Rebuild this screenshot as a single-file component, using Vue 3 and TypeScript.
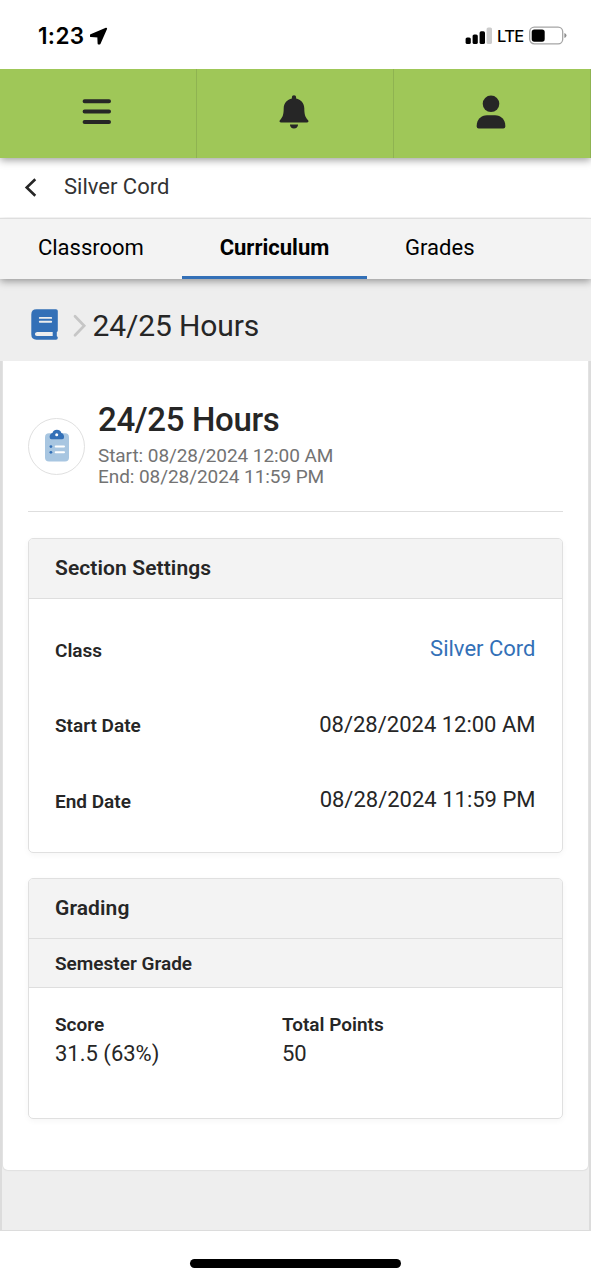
<script setup lang="ts">
interface Setting {
  label: string
  value: string
  link?: boolean
}

const tabs = ['Classroom', 'Curriculum', 'Grades']
const activeTab = 'Curriculum'

const settings: Setting[] = [
  { label: 'Class', value: 'Silver Cord', link: true },
  { label: 'Start Date', value: '08/28/2024 12:00 AM' },
  { label: 'End Date', value: '08/28/2024 11:59 PM' },
]

const grades = [
  { label: 'Score', value: '31.5 (63%)' },
  { label: 'Total Points', value: '50' },
]
</script>

<template>
  <div class="screen">
    <div class="status">
      <div class="clock">
        <span class="time">1:23</span>
        <svg class="arrow" width="20" height="20" viewBox="0 0 20 20">
          <path stroke="#000" stroke-width="1.800" stroke-linejoin="round" d="M1.900 9.100 17.200 2.600 10.700 17.500H9.500L9.200 10.500 1.900 10.200Z" />
        </svg>
      </div>
      <div class="signals">
        <svg width="28" height="18" viewBox="0 0 28 18">
          <rect x="0.600" y="10.500" width="5.200" height="6.500" rx="1.600" />
          <rect x="7.600" y="7.500" width="5.200" height="9.500" rx="1.600" />
          <rect x="14.600" y="4.300" width="5.400" height="12.700" rx="1.600" />
          <rect x="21.600" y="0.500" width="5.400" height="16.500" rx="1.600" fill="#ccc" />
        </svg>
        <span class="lte">LTE</span>
        <svg class="battery" width="38" height="20" viewBox="0 0 38 20">
          <rect x="0.700" y="1.200" width="33" height="16.600" rx="4.600" fill="none" stroke="#a5a5a5" stroke-width="1.300" />
          <rect x="2.700" y="3.500" width="13" height="12.200" rx="2.600" />
          <path d="M35.400 6.900q2.100.8 2.100 2.600t-2.100 2.600Z" fill="#8e8e8e" />
        </svg>
      </div>
    </div>

    <nav class="topbar">
      <div class="cell">
        <svg width="30" height="34" viewBox="0 0 30 34">
          <g stroke="#262626" stroke-width="4" stroke-linecap="round">
            <path d="M2.600 6.200H27M2.600 16.600H27M2.600 27H27" />
          </g>
        </svg>
      </div>
      <div class="cell">
        <svg width="30" height="34" viewBox="0 0 30 34">
          <path fill="#262626" d="M15 .3c1.300 0 2.100.9 2.100 2.100v1.200c4.700.9 8.200 4.800 8.200 9.700 0 6.400 1 8.800 3.600 11.700 1 1.100.7 2.600-1 2.600H2.100c-1.700 0-2-1.500-1-2.600C3.700 22.100 4.700 19.700 4.700 13.300c0-4.900 3.500-8.800 8.200-9.700V2.400C12.900 1.200 13.700.3 15 .3ZM10.900 29.400h8.200c0 2.300-1.800 4.100-4.100 4.100s-4.100-1.800-4.100-4.100Z" />
        </svg>
      </div>
      <div class="cell">
        <svg width="30" height="34" viewBox="0 0 30 34">
          <circle cx="15" cy="8.800" r="8.300" fill="#262626" />
          <path fill="#262626" d="M11 20.200h8c6 0 10.300 4.300 10.300 10.300v1q0 2-2 2H2.700q-2 0-2-2v-1c0-6 4.300-10.300 10.300-10.300Z" />
        </svg>
      </div>
    </nav>

    <header class="course">
      <svg width="14" height="22" viewBox="0 0 14 22">
        <path d="M11.300 2.300 2.700 10.500l8.600 8.200" fill="none" stroke="#262626" stroke-width="2.600" />
      </svg>
      <span>Silver Cord</span>
    </header>

    <div class="tabs">
      <div v-for="tab in tabs" :key="tab" class="tab" :class="{ active: tab === activeTab }">{{ tab }}</div>
    </div>

    <main class="content">
      <div class="crumbs">
        <svg class="book" width="28" height="32" viewBox="0 0 28 32">
          <path fill="#3370b7" d="M5.500.2H25q1.800 0 1.800 1.800v19.400q0 1.200-1 1.700v4.200q1 .2 1 1.500 0 1.900-1.800 1.900H5.500Q.3 30.700 .3 25.300V5.600Q.3.2 5.500.2Z" />
          <path stroke="#eee" stroke-width="1.900" stroke-linecap="round" d="M8.800 8.900h11.400M8.800 12.700h11.400" />
          <path fill="#eee" d="M6 22.900h15.700v4.200H6q-2.100-.2-2.100-2.100t2.100-2.100Z" />
        </svg>
        <svg class="sep" width="14" height="24" viewBox="0 0 14 24">
          <path d="M2 2.300 11.200 11.800 2 21.300" fill="none" stroke="#c6c6c6" stroke-width="2.700" stroke-linecap="round" />
        </svg>
        <span class="crumb">24/25 Hours</span>
      </div>

      <div class="body">
        <section class="card">
          <div class="intro">
            <div class="badge">
              <svg width="26" height="34" viewBox="0 0 26 34">
                <rect x="1" y="4.200" width="24" height="28.200" rx="4" fill="#a8c6e1" />
                <path fill="#3370b7" d="M8.400 3.900Q9.500.7 12.900.7t4.500 3.200q2.700.8 2.700 4.200 0 2.200-1.900 2.200H7.500q-1.900 0-1.900-2.200 0-3.400 2.800-4.200Z" />
                <circle cx="12.700" cy="5.700" r="1.500" fill="#fff" />
                <circle cx="6.900" cy="17.600" r="1.400" fill="#3370b7" />
                <circle cx="6.900" cy="23.300" r="1.400" fill="#3370b7" />
                <path stroke="#fff" stroke-width="2" stroke-linecap="round" d="M11.700 17.600h8.300M11.700 23.300h8.300" />
              </svg>
            </div>
            <div>
              <h1>24/25 Hours</h1>
              <p>Start: 08/28/2024 12:00 AM</p>
              <p>End: 08/28/2024 11:59 PM</p>
            </div>
          </div>

          <div class="panel settings">
            <h2>Section Settings</h2>
            <div class="rows">
              <div v-for="row in settings" :key="row.label" class="row">
                <span class="label">{{ row.label }}</span>
                <span class="value" :class="{ link: row.link }">{{ row.value }}</span>
              </div>
            </div>
          </div>

          <div class="panel grading">
            <h2>Grading</h2>
            <h3>Semester Grade</h3>
            <div class="grades">
              <div v-for="item in grades" :key="item.label">
                <div class="label">{{ item.label }}</div>
                <div class="value">{{ item.value }}</div>
              </div>
            </div>
          </div>
        </section>
      </div>
    </main>

    <footer class="home"><span class="bar"></span></footer>
  </div>
</template>

<style>
body {
  margin: 0;
  background: #fff;
}
</style>

<style scoped>
* {
  box-sizing: border-box;
}
.screen {
  width: 591px;
  height: 1280px;
  overflow: hidden;
  display: flex;
  flex-direction: column;
  background: #fff;
  color: #262626;
  font-family: Roboto, "Liberation Sans", sans-serif;
}
svg {
  display: block;
  flex: none;
}
.status {
  height: 69px;
  flex: none;
  display: flex;
  justify-content: space-between;
  padding: 2px 24px 0 38px;
  color: #000;
  font-family: Inter, "Liberation Sans", sans-serif;
}
.clock,
.signals {
  display: flex;
  align-items: center;
}
.time {
  font-size: 22.500px;
  font-weight: 600;
  letter-spacing: 0.350px;
}
.arrow {
  margin-left: 5px;
}
.lte {
  margin: 1px 5.500px 0 4.500px;
  font-size: 16.500px;
  font-weight: 500;
  letter-spacing: -0.700px;
}
.topbar {
  height: 88.500px;
  flex: none;
  display: flex;
  position: relative;
  z-index: 3;
  background: #9fc758;
  box-shadow: 0 2px 8px rgba(0, 0, 0, 0.400);
  clip-path: inset(0 0 -14px 0);
}
.cell {
  flex: 1;
  display: flex;
  justify-content: center;
  padding: 26px 2px 0 0;
  border-right: 1.500px solid #8fb351;
}
.course {
  height: 60px;
  flex: none;
  display: flex;
  align-items: center;
  gap: 26px;
  padding-left: 24px;
  font-size: 22px;
  color: #333;
}
.course span {
  padding-bottom: 2px;
}
.tabs {
  height: 61.500px;
  flex: none;
  display: flex;
  position: relative;
  z-index: 2;
  background: #f3f3f3;
  border-top: 1.500px solid #dedede;
  box-shadow: 0 2px 8px rgba(0, 0, 0, 0.400);
  clip-path: inset(0 0 -14px 0);
  font-size: 22px;
  color: #000;
}
.tab {
  padding: 0 37.900px;
  line-height: 58px;
  border-bottom: 3px solid transparent;
}
.tab.active {
  font-weight: 700;
  border-bottom-color: #3370b7;
}
.content {
  height: 952px;
  flex: none;
  background: #eee;
}
.crumbs {
  height: 82px;
  display: flex;
  align-items: center;
  padding: 10px 0 0 31px;
}
.sep {
  margin: 2px 0 0 14px;
}
.crumb {
  margin-left: 5.500px;
  font-size: 30px;
  letter-spacing: -0.120px;
}
.body {
  height: 870px;
  border: solid #dcdcdc;
  border-width: 0 2px 1.500px;
  padding: 0 1px;
}
.card {
  height: 809px;
  padding: 0 25px;
  background: #fff;
  border-radius: 0 0 5px 5px;
  box-shadow: 0 0 1px 1px #e0e0e0;
  clip-path: inset(0 -1px -2px -1px);
}
.intro {
  height: 151px;
  display: flex;
  gap: 13px;
  padding-top: 42px;
  border-bottom: 1.500px solid #dedede;
}
.badge {
  width: 57px;
  height: 57px;
  margin-top: 14.500px;
  display: flex;
  align-items: center;
  justify-content: center;
  border: 1.500px solid #e0e0e0;
  border-radius: 50%;
}
h1,
h2,
h3,
p {
  margin: 0;
}
h1 {
  font-size: 33px;
  line-height: 34px;
  font-weight: 500;
  letter-spacing: -0.350px;
}
p {
  font-size: 19px;
  line-height: 20.500px;
  letter-spacing: -0.070px;
  color: #737373;
}
h1 + p {
  margin-top: 9px;
}
.panel {
  margin-top: 26px;
  border: 1.500px solid #e0e0e0;
  border-radius: 5px;
  overflow: hidden;
  box-shadow: 0 2px 6px rgba(0, 0, 0, 0.040);
}
.settings {
  height: 315px;
}
.grading {
  height: 241px;
  margin-top: 25px;
}
h2,
h3 {
  padding-left: 26px;
  background: #f3f3f3;
  border-bottom: 1.500px solid #dedede;
  font-weight: 600;
}
h2 {
  height: 60px;
  line-height: 59px;
  font-size: 21px;
  letter-spacing: 0.100px;
}
h3 {
  height: 49px;
  line-height: 49px;
  font-size: 19px;
}
.rows {
  padding: 12px 26.500px 0 26px;
}
.row {
  height: 75.500px;
  display: flex;
  align-items: center;
  justify-content: space-between;
}
.row .label {
  padding-top: 3px;
}
.label {
  font-size: 19px;
  font-weight: 600;
}
.value {
  font-size: 22px;
}
.link {
  color: #3370b7;
}
.grades {
  display: grid;
  grid-template-columns: 227px 1fr;
  padding: 23px 26px;
}
.grades .label {
  line-height: 28px;
}
.grades .value {
  line-height: 29px;
}
.home {
  flex: 1;
  display: flex;
  justify-content: center;
  padding-top: 28px;
}
.bar {
  width: 211px;
  height: 9px;
  border-radius: 5px;
  background: #000;
}
</style>
